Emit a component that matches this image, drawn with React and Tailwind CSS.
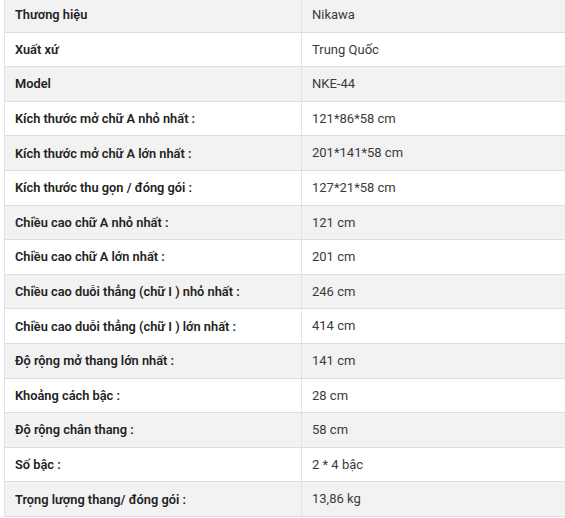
import React from 'react';

const SPECS = [
  ['Thương hiệu', 'Nikawa'],
  ['Xuất xứ', 'Trung Quốc'],
  ['Model', 'NKE-44'],
  ['Kích thước mở chữ A nhỏ nhất :', '121*86*58 cm'],
  ['Kích thước mở chữ A lớn nhất :', '201*141*58 cm'],
  ['Kích thước thu gọn / đóng gói :', '127*21*58 cm'],
  ['Chiều cao chữ A nhỏ nhất :', '121 cm'],
  ['Chiều cao chữ A lớn nhất :', '201 cm'],
  ['Chiều cao duỗi thẳng (chữ I ) nhỏ nhất :', '246 cm'],
  ['Chiều cao duỗi thẳng (chữ I ) lớn nhất :', '414 cm'],
  ['Độ rộng mở thang lớn nhất :', '141 cm'],
  ['Khoảng cách bậc :', '28 cm'],
  ['Độ rộng chân thang :', '58 cm'],
  ['Số bậc :', '2 * 4 bậc'],
  ['Trọng lượng thang/ đóng gói :', '13,86 kg'],
];

export default function App() {
  return (
    <div className="h-[518px] w-[565px] overflow-hidden bg-white font-['Roboto',sans-serif]">
      <div className="-mt-[2px] ml-[4px] w-[600px] border-l border-[#e3e3e3]">
        {SPECS.map(([label, value], i) => (
          <div
            key={label}
            className={`flex h-[34.6px] border-b border-[#dedede] ${i % 2 === 0 ? 'bg-[#f2f2f2]' : 'bg-white'}`}
          >
            <div className="flex w-[297px] items-center border-r border-[#e3e3e3] pl-[10px] text-[12.8px] font-semibold text-[#222]">
              {label}
            </div>
            <div className="flex flex-1 items-center pl-[10px] text-[13px] text-[#3a3a3a]">
              {value}
            </div>
          </div>
        ))}
      </div>
    </div>
  );
}
